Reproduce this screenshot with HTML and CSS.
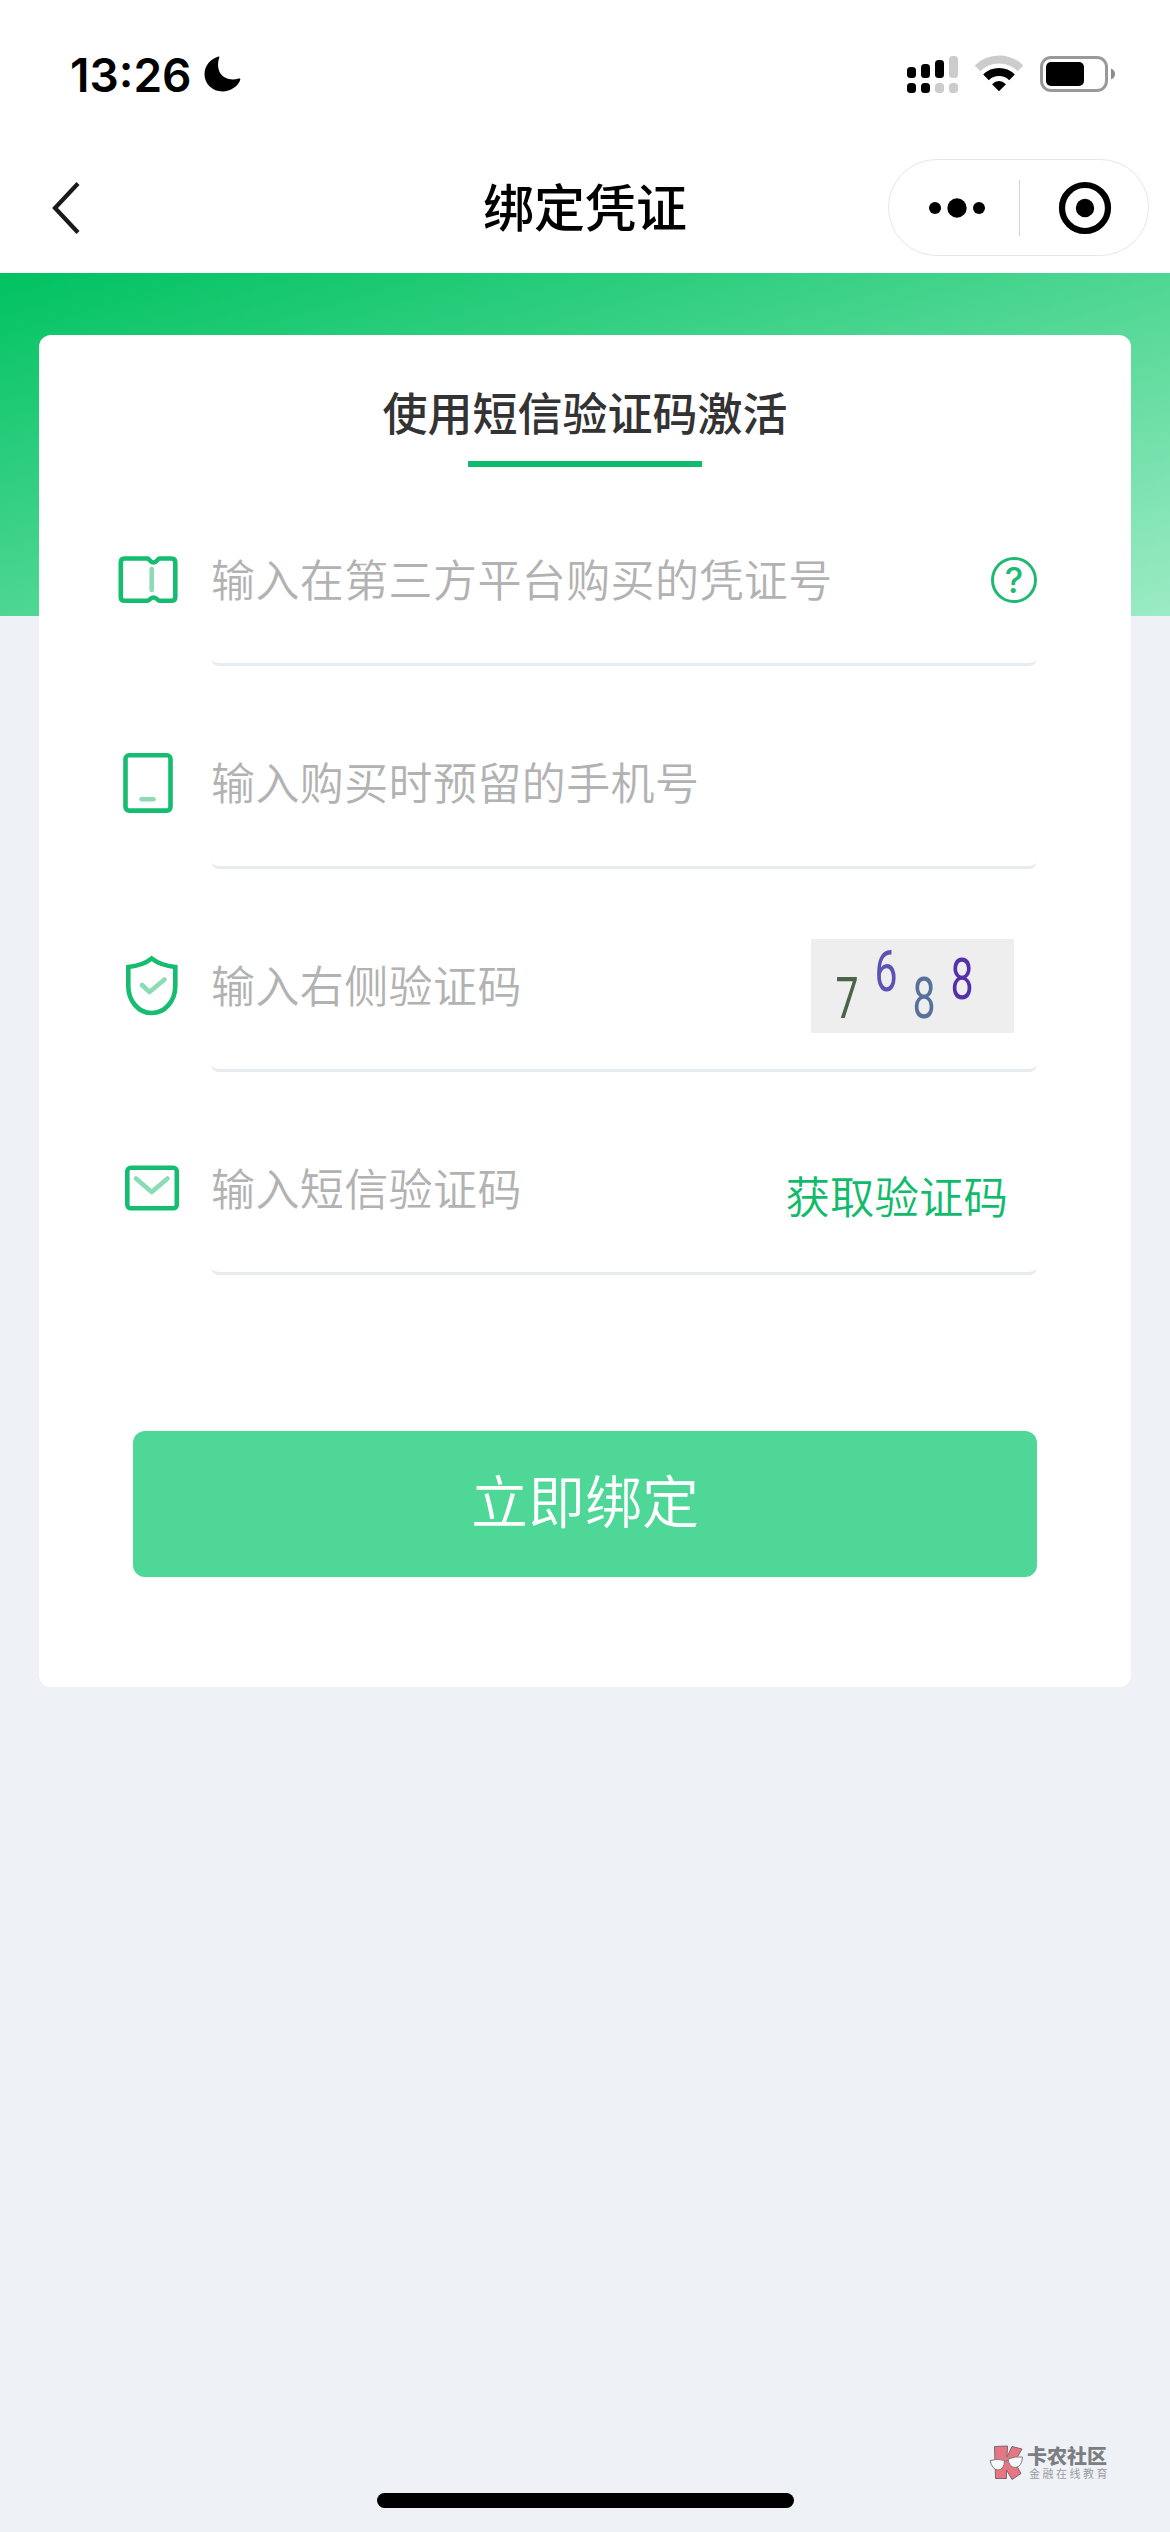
FILE: index.html
```html
<!DOCTYPE html>
<html lang="zh-CN">
<head>
<meta charset="utf-8">
<title>绑定凭证</title>
<link rel="stylesheet" href="styles.css">
</head>
<body>
<header class="header">
  <div class="status">
    <div class="clock">
      <span class="time">13:26</span>
      <svg class="moon" width="37" height="36" viewBox="0 0 37 36"><path d="M14.5 0.5C6 3 0.5 10 0.5 18.300C0.500 28 8.500 35.500 18.500 35.500C26.500 35.500 34 30.500 36.300 23.800C36.500 22.800 35.800 22.300 34.800 22.600C21 26.500 10.500 17 15.200 1.800C15.500 .8 15.200 .3 14.500 .5Z"/></svg>
    </div>
    <div class="indicators">
      <svg width="52" height="38" viewBox="0 0 52 38">
        <rect x="0" y="11" width="9" height="11" rx="3.500"/><rect x="14" y="8" width="9" height="14" rx="3.500"/><rect x="28" y="4" width="9" height="18" rx="3.500"/><rect class="off" x="42" y="0" width="9" height="22" rx="3.500"/>
        <rect x="0" y="27" width="9" height="10" rx="3.500"/><rect x="14" y="27" width="9" height="10" rx="3.500"/><rect class="off" x="28" y="27" width="9" height="10" rx="3.500"/><rect class="off" x="42" y="27" width="9" height="10" rx="3.500"/>
      </svg>
      <svg class="wifi" width="50" height="38" viewBox="0 0 50 38">
        <path class="arc off-arc" d="M3.500 13.300A30.500 30.500 0 0 1 46.500 13.300"/>
        <path class="arc" d="M12 22.300A18.500 18.500 0 0 1 38 22.300"/>
        <path d="M25 36.300L18 29.200Q25 22.600 32 29.200Z"/>
      </svg>
      <svg class="battery" width="76" height="38" viewBox="0 0 76 38">
        <rect class="shell" x="1.500" y="1.500" width="65" height="33" rx="9.500"/>
        <rect x="6" y="6" width="38" height="24" rx="5"/>
        <path class="nub" d="M71 12.500Q75 14 75 18T71 23.500Z"/>
      </svg>
    </div>
  </div>
  <div class="nav">
    <svg class="back" width="30" height="54" viewBox="0 0 30 54"><path d="M27 2.500L4 27L27 51.500"/></svg>
    <h1 class="title">绑定凭证</h1>
    <div class="capsule">
      <svg class="more" width="60" height="20" viewBox="0 0 60 20"><circle cx="8" cy="10" r="6"/><circle cx="30" cy="10" r="9.700"/><circle cx="52" cy="10" r="6"/></svg>
      <span class="divider"></span>
      <svg class="close" width="54" height="54" viewBox="0 0 54 54"><circle class="ring" cx="27" cy="27" r="23"/><circle cx="27" cy="27" r="9.200"/></svg>
    </div>
  </div>
</header>

<main class="page">
  <section class="card">
    <h2 class="heading">使用短信验证码激活</h2>
    <div class="underline"></div>

    <div class="row">
      <svg class="icon" width="78" height="78" viewBox="0 0 78 78">
        <path d="M11.500 17.500H34.500C36.500 17.500 37 21.500 40.500 21.500S44.500 17.500 46.500 17.500H58.500Q62.300 17.500 62.300 21.500V56Q62.300 59.800 58.500 59.800H46.500C44.500 59.800 44 56.500 40.500 56.500S36.500 59.800 34.500 59.800H11.500Q7.800 59.800 7.800 56V21.500Q7.800 17.500 11.500 17.500Z"/>
        <path class="soft" d="M38.700 28V49"/>
      </svg>
      <div class="field">
        <span class="placeholder">输入在第三方平台购买的凭证号</span>
        <span class="help">?</span>
      </div>
    </div>

    <div class="row">
      <svg class="icon" width="78" height="78" viewBox="0 0 78 78">
        <rect x="12.500" y="11.300" width="45" height="55.300" rx="3.500"/>
        <path class="soft" d="M28.500 55.300H40.500"/>
      </svg>
      <div class="field">
        <span class="placeholder">输入购买时预留的手机号</span>
      </div>
    </div>

    <div class="row">
      <svg class="icon" width="78" height="78" viewBox="0 0 78 78">
        <path class="sharp" d="M38.700 11.500C33 16 25 19 15.300 20V39C15.300 54 25.500 66 38.700 66S62.300 54 62.300 39V20C52.500 19 44.500 16 38.700 11.500Z"/>
        <path class="soft" d="M29 38L36.500 45L51.500 32.500"/>
      </svg>
      <div class="field">
        <span class="placeholder">输入右侧验证码</span>
        <svg class="captcha" width="203" height="94" viewBox="0 0 203 94">
          <rect width="203" height="94"/>
          <text class="n1" transform="translate(24.500 79) scale(.72 1)">7</text>
          <text class="n2" transform="translate(63.500 52) scale(.72 1)">6</text>
          <text class="n3" transform="translate(101.500 79) scale(.72 1)">8</text>
          <text class="n4" transform="translate(139.500 60) scale(.72 1)">8</text>
        </svg>
      </div>
    </div>

    <div class="row">
      <svg class="icon" width="78" height="78" viewBox="0 0 78 78">
        <rect x="14.300" y="17.800" width="49.500" height="40.500" rx="3.500"/>
        <path class="soft" d="M23 28.500L38.700 42L54.500 28.500"/>
      </svg>
      <div class="field">
        <span class="placeholder">输入短信验证码</span>
        <span class="send">获取验证码</span>
      </div>
    </div>

    <div class="submit">立即绑定</div>
  </section>

  <footer class="footer">
    <div class="brand">
      <svg width="36" height="36" viewBox="0 0 36 36">
        <path class="k" d="M5.500 1.500L18.500 1L18 12L23 1.500L33 4L25.500 17L32 28.500L23 34.500L17.500 25V33.500L6.500 33.500Z"/>
        <path class="glass" d="M1 15.500Q8 13 15.500 15.500Q15.500 24.500 9 25Q3 24.500 1 15.500ZM19 14Q26 11 33.500 12Q33 21.500 26.500 22.500Q20 22.500 19 14ZM15.500 16.500L19 15.500"/>
      </svg>
      <div class="brand-text">
        <span class="brand-name">卡农社区</span>
        <span class="brand-sub">金融在线教育</span>
      </div>
    </div>
    <div class="home"></div>
  </footer>
</main>
</body>
</html>
```

FILE: styles.css
```css
* { box-sizing: border-box; margin: 0; padding: 0; }
body {
  width: 1170px;
  height: 2532px;
  display: flex;
  flex-direction: column;
  font-family: "Noto Sans CJK SC", sans-serif;
  overflow: hidden;
}
svg { display: block; flex: none; }

.header { height: 273px; background: #fff; flex: none; }
.status {
  height: 142px;
  padding: 0 54px 0 70px;
  display: flex;
  justify-content: space-between;
}
.clock { display: flex; padding-top: 56px; }
.time {
  width: 134px;
  font: 600 46px/38px Inter, sans-serif;
}
.indicators { display: flex; padding-top: 56px; }
.off { fill: #ccc; }
.wifi { margin: -1px 0 0 15px; }
.arc { fill: none; stroke: #000; stroke-width: 8; }
.off-arc { stroke: #ccc; }
.battery { margin-left: 16px; }
.shell { fill: none; stroke: #999; stroke-width: 3; }
.nub { fill: #8c8c8c; }

.nav {
  height: 131px;
  padding: 0 21px 0 51px;
  display: grid;
  grid-template-columns: 261px 1fr 261px;
  align-items: center;
}
.back { fill: none; stroke: #191919; stroke-width: 4.200; }
.title {
  text-align: center;
  font-size: 51px;
  font-weight: 500;
  line-height: 60px;
  margin-right: 30px;
  padding-bottom: 6px;
}
.capsule {
  height: 97px;
  border: 1px solid #e6e6e6;
  border-radius: 49px;
  display: flex;
  align-items: center;
  padding-left: 38px;
}
.divider { width: 1px; height: 56px; background: #d4d4d4; margin: 0 38px 0 32px; }
.ring { fill: none; stroke: #000; stroke-width: 6.200; }

.page {
  flex: 1;
  display: flex;
  flex-direction: column;
  padding: 62px 39px 0;
  background: linear-gradient(to bottom right, #00c261, #9cebc4) no-repeat 0 0 / 100% 343px, #eef2f7;
}
.card {
  height: 1352px;
  background: #fff;
  border-radius: 12px;
  padding: 47px 94px 0 74px;
}
.heading {
  margin-right: -20px;
  text-align: center;
  font-size: 45px;
  font-weight: 500;
  line-height: 60px;
  color: #333;
}
.underline { width: 234px; height: 6px; margin: 19px 0 28px 355px; background: #11bb6c; }
.row {
  height: 171px;
  margin-bottom: 32px;
  display: flex;
}
.icon {
  margin: 46px 20px 0 0;
  fill: none;
  stroke: #16bd70;
  stroke-width: 4.600;
  stroke-linejoin: round;
  stroke-linecap: round;
}
.icon .sharp { stroke-linejoin: miter; }
.icon .soft { stroke: #8adcb4; }
.field {
  flex: 1;
  display: flex;
  justify-content: space-between;
  align-items: center;
  border-bottom: 3px solid #e6ebf0;
  border-radius: 8px;
  padding-top: 2px;
}
.placeholder {
  font-size: 44px;
  font-weight: 350;
  letter-spacing: 0.400px;
  line-height: 60px;
  padding-bottom: 4px;
  color: #b2b2b2;
  white-space: nowrap;
}
.help {
  width: 46px;
  height: 46px;
  border: 3px solid #1fb971;
  border-radius: 50%;
  color: #1fb971;
  font: 500 35px/40px Inter, sans-serif;
  text-align: center;
}
.captcha { margin-right: 23px; }
.captcha rect { fill: #eee; }
.captcha text { font: 400 57px Roboto, sans-serif; }
.captcha .n1 { fill: #4b6349; }
.captcha .n2 { fill: #5b53b4; }
.captcha .n3 { fill: #56719a; }
.captcha .n4 { fill: #5430ad; }
.send {
  margin: 12px 29px 0 0;
  font-size: 44.500px;
  font-weight: 350;
  line-height: 60px;
  color: #11bb6c;
}
.submit {
  height: 146px;
  margin: 156px 0 0 20px;
  border-radius: 12px;
  background: #4ed796;
  color: #fff;
  text-align: center;
  font-size: 57px;
  font-weight: 350;
  line-height: 134px;
}

.footer {
  margin-top: auto;
  padding-bottom: 24px;
  display: flex;
  flex-direction: column;
}
.brand { display: flex; align-self: flex-end; margin: 0 23px 12px 0; }
.k { fill: #e87582; stroke: #77686f; stroke-width: 1; }
.glass { fill: #f6f8fa; stroke: #7d7d82; stroke-width: 1; }
.brand-text { display: flex; flex-direction: column; margin-left: 2px; width: 81px; }
.brand-name { font-size: 20px; font-weight: 900; line-height: 21px; color: #7c7e81; white-space: nowrap; }
.brand-sub { font-size: 11px; line-height: 14px; letter-spacing: 2.500px; padding-left: 2px; color: #9a9da1; white-space: nowrap; }
.home { width: 417px; height: 15px; border-radius: 8px; background: #000; align-self: center; }
```
